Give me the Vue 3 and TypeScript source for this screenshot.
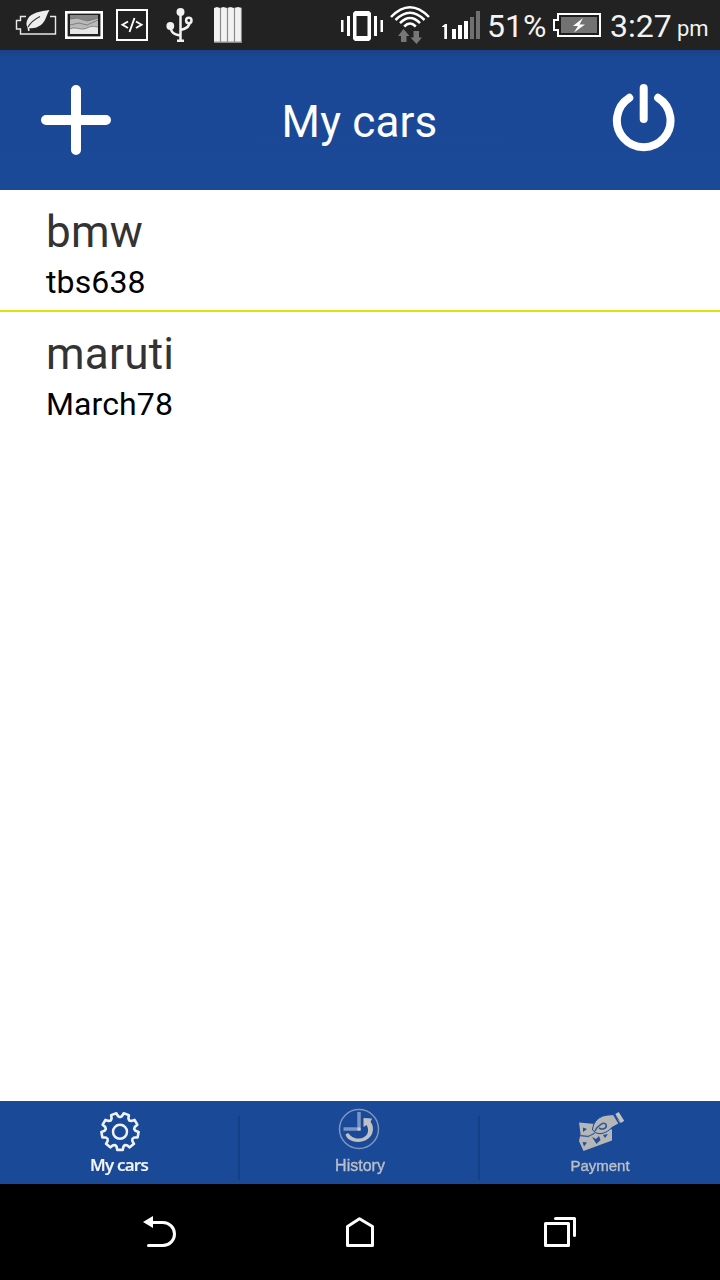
<script setup lang="ts">
interface Car {
  name: string
  plate: string
}

const cars: Car[] = [
  { name: 'bmw', plate: 'tbs638' },
  { name: 'maruti', plate: 'March78' },
]

// Outline of a nine-toothed gear centred on the origin, one tooth pointing down.
function gearPath(teeth: number, outer: number, inner: number): string {
  const step = 360 / teeth
  const points: string[] = []
  const add = (angle: number, radius: number) => {
    const a = (angle * Math.PI) / 180
    points.push(`${(Math.cos(a) * radius).toFixed(2)} ${(Math.sin(a) * radius).toFixed(2)}`)
  }
  for (let i = 0; i < teeth; i++) {
    const mid = 90 + i * step
    add(mid - 13, inner + 0.4)
    add(mid - 8.5, outer)
    add(mid + 8.5, outer)
    add(mid + 13, inner + 0.4)
    add(mid + step / 2, inner - 0.6)
  }
  return `M${points.join('L')}Z`
}

const gear = gearPath(9, 18.6, 15)
</script>

<template>
  <div class="screen">
    <header class="status">
      <svg class="s-leaf" viewBox="14 6 44 38" width="44" height="38">
        <path d="M26 16.500H20.500V20.500H16.500V29H20.500V34H55.500V16.500H50" fill="none" stroke="#e8e8e8" stroke-width="1.400" />
        <path d="M49.500 10C41 11 31 13 28 18.500C26 22 26 25 27.500 27.500L28 31H29.500V28C35 29 42 26 45 20C46.500 17 47.500 13 49.500 10Z" fill="#eee" />
        <path d="M28 27C31 22 35 19 40 16.500" fill="none" stroke="#333" stroke-width="1.100" />
      </svg>
      <svg class="s-pic" viewBox="65 6 38 38" width="38" height="38">
        <rect x="66.300" y="12.300" width="35.400" height="25.400" fill="#1e1e1e" stroke="#fff" stroke-width="2.600" />
        <rect x="70" y="15" width="28" height="19" fill="#b9b9b9" />
        <path d="M70 15H98V18L88 21L78 18L70 19Z" fill="#858585" />
        <path d="M70 29C76 26 81 31 87 28S94 27 98 27V34H70Z" fill="#e6e6e6" />
        <path d="M70 19L77 18L87 21L98 18M70 25L79 23L87 25L98 20M70 29C76 26 81 31 87 28S94 27 98 27" fill="none" stroke="#666" stroke-width=".7" />
      </svg>
      <svg class="s-code" viewBox="116 6 32 38" width="32" height="38">
        <rect x="117" y="10" width="30" height="30" fill="none" stroke="#fff" stroke-width="2" />
        <path d="M128 21.500L122.500 24.800L128 28M136 21.500L141.500 24.800L136 28M134.500 18L129.500 32" fill="none" stroke="#fff" stroke-width="1.900" />
      </svg>
      <svg class="s-usb" viewBox="165 6 30 38" width="30" height="38">
        <g fill="none" stroke="#f2f2f2" stroke-width="2.500">
          <path d="M180.500 12V40M170.500 27C171 33 174 34 180 35.500M180.500 30C185 29 190 27 189.500 22" />
          <circle cx="188.800" cy="20.500" r="2.700" />
        </g>
        <circle cx="180.500" cy="12" r="4" fill="#f2f2f2" />
        <circle cx="170.300" cy="26" r="3.900" fill="#f2f2f2" />
        <path d="M177 39.500H184V42H177Z" fill="#f2f2f2" />
      </svg>
      <svg class="s-bars" viewBox="214 6 28 38" width="28" height="38">
        <path d="M214 8L217 7L220 8L223.500 7L227 8L230.500 7L234 8L238 7L242 8V42.500H214Z" fill="#f2f2f2" />
        <path d="M220.500 8V42M227.500 8V42M234.500 8V42M241.500 8V42" stroke="#8a8a8a" stroke-width="1.200" />
        <path d="M214 42H242" stroke="#8a8a8a" stroke-width="1" />
      </svg>

      <svg class="s-vib" viewBox="341 6 42 38" width="42" height="38">
        <path fill="#fff" d="M341 20H343.500V32H341ZM347 16H350V36H347ZM374 16H377V36H374ZM380.500 20H383V32H380.500Z" />
        <path fill="#fff" fill-rule="evenodd" d="M355 11H369L371 13V39L369 41H355L353 39V13ZM356.500 16V36H367.500V16Z" />
      </svg>
      <svg class="s-wifi" viewBox="389 4 42 42" width="42" height="42">
        <g fill="none" stroke="#fff" stroke-width="2.500">
          <path d="M391 17Q410 -2.500 429 17" />
          <path d="M395.500 20Q410 5.500 424.500 20" />
          <path d="M400 23.200Q410 13 420 23.200" />
          <path d="M404.200 26.500Q410 20.700 415.800 26.500" />
        </g>
        <path d="M403.500 29L409.500 36H406.500V42H401V36H398ZM416.500 44L410.500 37.500H413.500V31H419V37.500H422Z" fill="#777" />
      </svg>
      <svg class="s-signal" viewBox="441 6 39 38" width="39" height="38">
        <path d="M442 26.500L445 24H447V39H444.300V27H442ZM452 29H456V39H452ZM458 25H462V39H458ZM464 21H468V39H464Z" fill="#fff" />
        <path d="M470 17H474V39H470ZM476 11H480V39H476Z" fill="#707070" />
      </svg>
      <span class="percent">51%</span>
      <svg class="s-batt" viewBox="553 6 48 38" width="48" height="38">
        <path d="M558 14H600V36H558V30H554V20H558Z" fill="#1c1c1c" stroke="#fff" stroke-width="2" />
        <rect x="561" y="17" width="36" height="16" fill="#727272" />
        <path d="M583 18L573 26H578L574 32.500L585 24.500H579.500Z" fill="#fff" />
      </svg>
      <span class="time">3:27</span>
      <span class="ampm">pm</span>
    </header>

    <div class="titlebar">
      <svg class="add" viewBox="0 0 70 70" width="70" height="70">
        <path d="M35 5V65M5 35H65" stroke="#fff" stroke-width="10" stroke-linecap="round" />
      </svg>
      <h1>My cars</h1>
      <svg class="power" viewBox="611 83 64 70" width="64" height="70">
        <path d="M643.700 88V119M629.300 97.800A26.800 26.800 0 1 0 658.100 97.800" fill="none" stroke="#fff" stroke-width="8" stroke-linecap="round" />
      </svg>
    </div>

    <main>
      <article v-for="car in cars" :key="car.plate" class="car">
        <div class="name">{{ car.name }}</div>
        <div class="plate">{{ car.plate }}</div>
      </article>
    </main>

    <nav class="tabs">
      <div class="tab active">
        <svg viewBox="-22 -24.500 44 46" width="44" height="46">
          <path :d="gear" fill="none" stroke="#eef2fa" stroke-width="2.600" stroke-linejoin="round" />
          <circle cx="0" cy="0.300" r="7" fill="none" stroke="#eef2fa" stroke-width="2.500" />
        </svg>
        <span>My cars</span>
      </div>
      <div class="tab history">
        <svg viewBox="338 1107 44 46" width="44" height="46">
          <circle cx="359" cy="1129" r="19.500" fill="none" stroke="#7f96bd" stroke-width="1.500" />
          <path d="M359 1112V1129H343.500" fill="none" stroke="#7c95c3" stroke-width="3.500" />
          <circle cx="359" cy="1129" r="1.800" fill="#c7cbd1" />
          <path d="M345.500 1134.500C348 1144.500 370 1145.500 372.800 1131C373.400 1127 372.500 1124 370.600 1122L372 1118.500L363.500 1118V1127L366.500 1125C370 1130 368 1138.500 358.500 1138.500C353 1138.500 351 1136 348 1133Z" fill="#bfc1c4" />
        </svg>
        <span>History</span>
      </div>
      <div class="tab payment">
        <svg viewBox="576 1107 48 46" width="48" height="46">
          <path d="M579 1122.500L595 1124L612 1129.500V1140.500L583.500 1151L579 1141L580.500 1134Z" fill="#b5b6b7" />
          <path d="M580 1135.500L588 1136.500L595 1133" fill="none" stroke="#3f639f" stroke-width="1.300" />
          <path d="M583 1127.500L587 1129L583 1132ZM582.500 1142L587 1142.500L584 1146.500ZM592 1137L596 1139L599 1136L600.500 1140L596.500 1144ZM603 1135L608 1134L605 1138Z" fill="#23509a" />
          <path d="M592.500 1130C593 1121 600 1115.500 608 1115L614.500 1114.500L621 1122.500L612 1127.500C606 1133.500 600 1135 595.500 1132.500Z" fill="#b5b6b7" stroke="#1a4998" stroke-width="1" />
          <path d="M595 1131C598 1125 604 1121.500 606 1124.500C607.500 1128 603 1130.500 599 1128" fill="none" stroke="#315797" stroke-width="1.500" />
          <path d="M617 1113L622.500 1122" stroke="#c2c3c4" stroke-width="4" />
          <path d="M613.800 1114.500L619.500 1124" stroke="#1a4998" stroke-width="1.500" />
        </svg>
        <span>Payment</span>
      </div>
    </nav>

    <footer class="system">
      <svg viewBox="140 1212 40 40" width="40" height="40">
        <path d="M152 1222.500H163A11.500 11.500 0 0 1 163 1245.500H148.500" fill="none" stroke="#fff" stroke-width="3" stroke-linecap="round" />
        <path d="M143 1222L153 1216V1228Z" fill="#fff" />
      </svg>
      <svg viewBox="340 1212 40 40" width="40" height="40">
        <path d="M347.500 1226.500L359.500 1218.800L372.500 1226.500V1245.500H347.500Z" fill="none" stroke="#fff" stroke-width="3" stroke-linejoin="round" />
      </svg>
      <svg viewBox="540 1212 40 40" width="40" height="40">
        <path d="M545.500 1223.500H568.500V1245.500H545.500ZM555.500 1218.500H574.500V1235.500" fill="none" stroke="#fff" stroke-width="3" stroke-linecap="round" stroke-linejoin="round" />
      </svg>
    </footer>
  </div>
</template>

<style>
body {
  margin: 0;
  background: #fff;
}
</style>

<style scoped>
.screen {
  width: 720px;
  height: 1280px;
  display: flex;
  flex-direction: column;
  overflow: hidden;
  background: #fff;
  font-family: Roboto, "Liberation Sans", sans-serif;
}
svg {
  display: block;
  flex: none;
}
.status {
  height: 50px;
  flex: none;
  display: flex;
  align-items: center;
  background: #222;
  color: #f3f3f3;
  white-space: nowrap;
}
.s-leaf { margin-left: 14px; }
.s-pic { margin-left: 7px; }
.s-code { margin-left: 13px; }
.s-usb { margin-left: 17px; }
.s-bars { margin-left: 19px; }
.s-vib { margin-left: 99px; }
.s-wifi { margin-left: 6px; }
.s-signal { margin-left: 10px; }
.percent,
.time {
  font-size: 32px;
  line-height: 50px;
  height: 48px;
}
.percent {
  width: 66px;
  margin-left: 7px;
}
.time {
  width: 67px;
  margin-left: 9px;
}
.ampm {
  font-size: 22px;
  line-height: 50px;
  height: 42px;
}
.titlebar {
  height: 140px;
  flex: none;
  box-sizing: border-box;
  padding: 0 45px 0 41px;
  display: grid;
  grid-template-columns: 70px 1fr 64px;
  align-items: center;
  background: linear-gradient(#1b4187 0, #1a4896 8px, #1a4998 100%);
  color: #fff;
}
.power { margin-bottom: 5px; }
h1 {
  margin: 4px 3px 0 0;
  text-align: center;
  font-weight: 400;
  font-size: 44px;
  line-height: 52px;
  letter-spacing: .15px;
}
main { flex: 1; }
.car {
  box-sizing: border-box;
  height: 122px;
  padding: 16px 46px 0;
}
.car:not(:last-child) { border-bottom: 2px solid #e2e009; }
.name {
  font-size: 44px;
  line-height: 52px;
  letter-spacing: .25px;
  color: #333;
}
.plate {
  font-size: 32px;
  line-height: 38px;
  margin-top: 5px;
  letter-spacing: .12px;
  color: #000;
}
.tabs {
  height: 83px;
  flex: none;
  display: grid;
  grid-template-columns: repeat(3, 240px);
  background: #1a4998;
}
.tab {
  display: flex;
  flex-direction: column;
  align-items: center;
  padding-top: 6px;
  background: linear-gradient(#174084, #174084) right 0 top 15px / 2px 64px no-repeat;
}
.tab:last-child { background: none; }
.tab svg { filter: blur(.45px); }
.tab span {
  margin-top: 2px;
  font: 16px/22px "Liberation Sans", Arial, sans-serif;
  color: #bcc0c6;
  -webkit-text-stroke: .35px #bcc0c6;
  white-space: nowrap;
  filter: blur(.4px);
}
.payment span {
  font-size: 15px;
}
.active span {
  margin: 1px 2px 0 0;
  font: 600 17px/22px "Open Sans", sans-serif;
  letter-spacing: -.75px;
  color: #f4f6fa;
  -webkit-text-stroke: .2px #f4f6fa;
}
.system {
  height: 96px;
  flex: none;
  display: flex;
  justify-content: center;
  gap: 160px;
  align-items: center;
  background: #000;
}
</style>
